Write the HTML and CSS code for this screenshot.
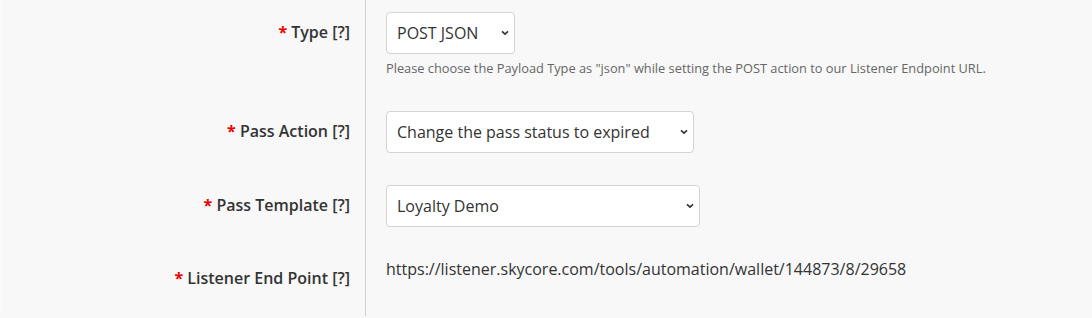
FILE: index.html
```html
<!DOCTYPE html>
<html>
<head>
<meta charset="utf-8">
<link rel="stylesheet" href="styles.css">
</head>
<body>
<div class="panel">
  <div class="row">
    <div class="label-cell"><label class="ctl-label"><span class="req">*</span> Type [?]</label></div>
    <div class="field-cell">
      <span class="select-wrap w1">
        <select class="select"><option>POST JSON</option></select>
        <svg class="chev" width="8" height="6" viewBox="0 0 8 6"><path d="M1 1.3 L4 4.2 L7 1.3" fill="none" stroke="#333" stroke-width="1.6"/></svg>
      </span>
      <p class="help">Please choose the Payload Type as "json" while setting the POST action to our Listener Endpoint URL.</p>
    </div>
  </div>
  <div class="row">
    <div class="label-cell"><label class="ctl-label"><span class="req">*</span> Pass Action [?]</label></div>
    <div class="field-cell">
      <span class="select-wrap w2">
        <select class="select"><option>Change the pass status to expired</option></select>
        <svg class="chev" width="8" height="6" viewBox="0 0 8 6"><path d="M1 1.3 L4 4.2 L7 1.3" fill="none" stroke="#333" stroke-width="1.6"/></svg>
      </span>
    </div>
  </div>
  <div class="row">
    <div class="label-cell"><label class="ctl-label"><span class="req">*</span> Pass Template [?]</label></div>
    <div class="field-cell">
      <span class="select-wrap w3">
        <select class="select"><option>Loyalty Demo</option></select>
        <svg class="chev" width="8" height="6" viewBox="0 0 8 6"><path d="M1 1.3 L4 4.2 L7 1.3" fill="none" stroke="#333" stroke-width="1.6"/></svg>
      </span>
    </div>
  </div>
  <div class="row last">
    <div class="label-cell"><label class="ctl-label static-label"><span class="req">*</span> Listener End Point [?]</label></div>
    <div class="field-cell">
      <p class="static">https://listener.skycore.com/tools/automation/wallet/144873/8/29658</p>
    </div>
  </div>
</div>
</body>
</html>
```

FILE: styles.css
```css
html, body {
  margin: 0;
  padding: 0;
  background: #f8f8f8;
}
body {
  font-family: "Open Sans", "Liberation Sans", sans-serif;
  color: #333;
  height: 318px;
  overflow: hidden;
}
.panel {
  display: flex;
  flex-direction: column;
  height: 316px;
  border-left: 1px solid #fbfbfb;
}
.row {
  display: flex;
  flex: 0 0 auto;
}
.row.last {
  flex: 1 1 auto;
}
.label-cell {
  width: 349px;
  padding-right: 15px;
  border-right: 1px solid #cfcfcf;
  display: flex;
  justify-content: flex-end;
  align-items: flex-start;
  padding-top: 22px;
  padding-bottom: 20px;
}
.ctl-label {
  font-size: 16px;
  font-weight: 600;
  line-height: 20px;
  color: #333;
  white-space: nowrap;
}
.static-label {
  margin-top: -1px;
}
.req {
  color: #ee0000;
  font-weight: 700;
}
.field-cell {
  padding: 12px 0 20px 20px;
  flex: 1;
}
.select-wrap {
  position: relative;
  display: inline-block;
  vertical-align: top;
}
.w1 { width: 129px; }
.w2 { width: 308px; }
.w3 { width: 314px; }
.select {
  -webkit-appearance: none;
  appearance: none;
  display: block;
  width: 100%;
  height: 42px;
  box-sizing: border-box;
  border: 1px solid #d4d4d4;
  border-radius: 4px;
  background: #fff;
  font-family: "Open Sans", "Liberation Sans", sans-serif;
  font-size: 16px;
  color: #333;
  padding: 0 24px 0 10px;
  margin: 0;
  outline: none;
}
.chev {
  position: absolute;
  right: 6px;
  top: 18px;
}
.help {
  margin: 5px 0 2px 0;
  font-size: 12.8px;
  line-height: 18px;
  color: #666;
}
.static {
  margin: 0;
  font-size: 16px;
  line-height: 20px;
  color: #333;
}
```
